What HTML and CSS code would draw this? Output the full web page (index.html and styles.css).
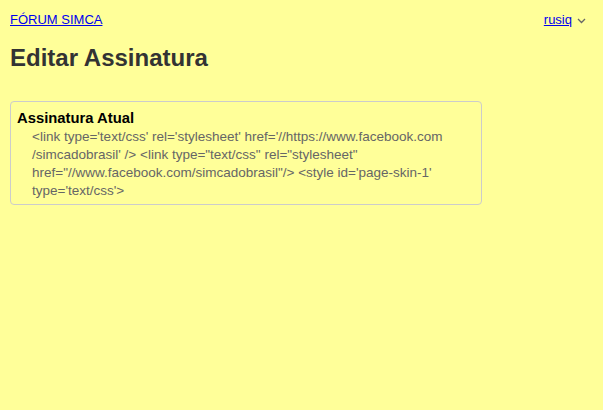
FILE: index.html
```html
<!DOCTYPE html>
<html lang="pt">
<head>
<meta charset="utf-8">
<link rel="stylesheet" href="styles.css">
</head>
<body>
<div class="page">
  <header class="top">
    <a class="brand" href="#">FÓRUM SIMCA</a>
    <div class="user">
      <a href="#">rusiq</a>
      <svg class="chev" width="9" height="6" viewBox="0 0 9 6"><path d="M1 1 L4.5 4.5 L8 1" fill="none" stroke="#666" stroke-width="1.3"/></svg>
    </div>
  </header>
  <h1 class="title">Editar Assinatura</h1>
  <section class="card">
    <h2 class="card-title">Assinatura Atual</h2>
    <div class="sig">&lt;link type='text/css' rel='stylesheet' href='//https://www.facebook.com<wbr>/simcadobrasil' /&gt; &lt;link type="text/css" rel="stylesheet" href="//www.facebook.com/simcadobrasil"/&gt; &lt;style id='page-skin-1' type='text/css'&gt;</div>
  </section>
</div>
</body>
</html>
```
FILE: styles.css
```css
html, body {
  margin: 0;
  padding: 0;
  background: #ffff99;
}
body {
  font-family: "Liberation Sans", Arial, sans-serif;
  color: #333;
}
.page {
  padding: 10px;
}
.top {
  display: flex;
  justify-content: space-between;
  align-items: center;
  font-size: 13px;
  line-height: 18px;
  margin-top: 1px;
}
.top a {
  color: #0000ee;
}
.user {
  display: flex;
  align-items: center;
  gap: 5px;
  margin-right: 7px;
}
.chev {
  display: block;
  margin-top: 1px;
}
.title {
  font-size: 24px;
  font-weight: bold;
  margin: 15px 0 0;
  line-height: 28px;
  color: #333;
}
.card {
  width: 458px;
  margin-top: 29px;
  border: 1px solid #cccccc;
  border-radius: 4px;
  padding: 6px 6px 4px 6px;
}
.card-title {
  font-size: 14.8px;
  font-weight: bold;
  color: #000;
  margin: 0;
  line-height: 20px;
}
.sig {
  font-size: 13.5px;
  line-height: 18px;
  color: #666;
  padding-left: 15px;
}
```
